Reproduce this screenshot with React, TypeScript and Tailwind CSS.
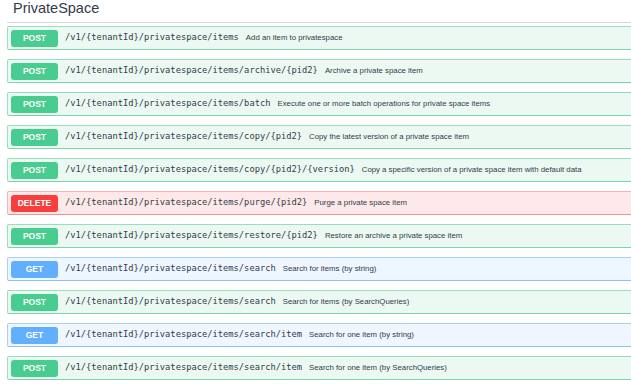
import React from "react";

type Method = "POST" | "GET" | "DELETE";

const rows: { m: Method; path: string; desc: string }[] = [
  { m: "POST", path: "/v1/{tenantId}/privatespace/items", desc: "Add an item to privatespace" },
  { m: "POST", path: "/v1/{tenantId}/privatespace/items/archive/{pid2}", desc: "Archive a private space item" },
  { m: "POST", path: "/v1/{tenantId}/privatespace/items/batch", desc: "Execute one or more batch operations for private space items" },
  { m: "POST", path: "/v1/{tenantId}/privatespace/items/copy/{pid2}", desc: "Copy the latest version of a private space item" },
  { m: "POST", path: "/v1/{tenantId}/privatespace/items/copy/{pid2}/{version}", desc: "Copy a specific version of a private space item with default data" },
  { m: "DELETE", path: "/v1/{tenantId}/privatespace/items/purge/{pid2}", desc: "Purge a private space item" },
  { m: "POST", path: "/v1/{tenantId}/privatespace/items/restore/{pid2}", desc: "Restore an archive a private space item" },
  { m: "GET", path: "/v1/{tenantId}/privatespace/items/search", desc: "Search for items (by string)" },
  { m: "POST", path: "/v1/{tenantId}/privatespace/items/search", desc: "Search for items (by SearchQueries)" },
  { m: "GET", path: "/v1/{tenantId}/privatespace/items/search/item", desc: "Search for one item (by string)" },
  { m: "POST", path: "/v1/{tenantId}/privatespace/items/search/item", desc: "Search for one item (by SearchQueries)" },
];

const rowStyle: Record<Method, string> = {
  POST: "bg-[#ebf9f2] border-[#97dfbe] border-b-[#78d6aa]",
  GET: "bg-[#eef6ff] border-[#a9d0fa] border-b-[#8bc0f8]",
  DELETE: "bg-[#fde9e9] border-[#f8b0b0] border-b-[#f58e8e]",
};

const badgeStyle: Record<Method, string> = {
  POST: "bg-[#49cc90]",
  GET: "bg-[#61affe]",
  DELETE: "bg-[#f93e3e]",
};

export default function App() {
  return (
    <div className="w-[631px] h-[388px] overflow-hidden bg-white" style={{ fontFamily: '"Liberation Sans", Arial, sans-serif' }}>
      <div className="w-[650px] pl-[7px]">
        <div className="border-b border-[#d9d9d9] h-[23px] pl-[6px] text-[14.5px] leading-[17px] text-[#333b4a]">
          PrivateSpace
        </div>
        <div className="flex flex-col gap-[9px] pt-[3px]">
          {rows.map((r, i) => (
            <div
              key={i}
              className={`h-[24px] flex items-center border rounded-[2px] pl-[3px] ${rowStyle[r.m]}`}
            >
              <div
                className={`w-[47px] h-[17px] rounded-[3px] flex items-center justify-center text-white font-bold text-[8.5px] ${badgeStyle[r.m]}`}
              >
                {r.m}
              </div>
              <span
                className="ml-[7px] text-[8.75px] text-[#333b4a] whitespace-nowrap"
                style={{ fontFamily: '"DejaVu Sans Mono", monospace' }}
              >
                {r.path}
              </span>
              <span className="ml-[7px] text-[7.8px] text-[#333b4a] whitespace-nowrap">{r.desc}</span>
            </div>
          ))}
        </div>
      </div>
    </div>
  );
}
